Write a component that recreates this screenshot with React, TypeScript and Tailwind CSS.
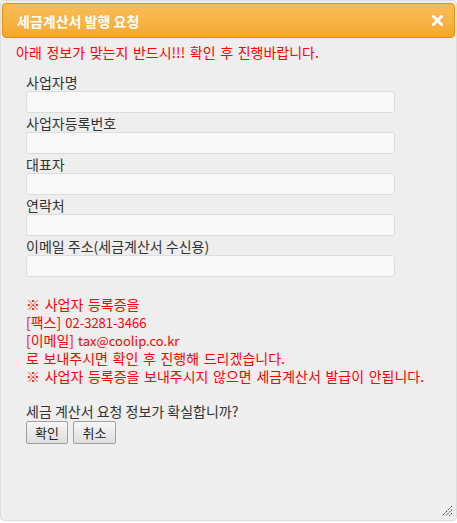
export default function App() {
  const font = { fontFamily: '"Noto Sans CJK KR", "Noto Sans", sans-serif' };
  const fields = ["사업자명", "사업자등록번호", "대표자", "연락처", "이메일 주소(세금계산서 수신용)"];
  const notes: [string, string][] = [
    ["※ 사업자 등록증을", ""],
    ["[팩스]", "02-3281-3466"],
    ["[이메일]", "tax@coolip.co.kr"],
    ["로 보내주시면 확인 후 진행해 드리겠습니다.", ""],
    ["※ 사업자 등록증을 보내주시지 않으면 세금계산서 발급이 안됩니다.", ""],
  ];
  return (
    <div className="w-[457px] h-[523px] bg-white" style={font}>
      <div className="relative w-[457px] h-[521px] bg-[#eeeeee] border border-[#dddddd] rounded-[4px] px-[1px] pt-[2px] flex flex-col">
        <div className="h-[35px] rounded-[4px] border border-[#e78f08] bg-gradient-to-b from-[#f8bc55] via-[#f7b446] to-[#f5a72c] flex items-center justify-between pl-[14px] pr-[12px]">
          <span className="text-white font-bold text-[14px] leading-none">세금계산서 발행 요청</span>
          <svg width="11" height="11" viewBox="0 0 11 11" className="mr-[-1px]">
            <path d="M1.5 1.5 L9.5 9.5 M9.5 1.5 L1.5 9.5" stroke="white" strokeWidth="3" strokeLinecap="round" />
          </svg>
        </div>
        <div className="pl-[14px] pt-[5px] h-[23px] flex items-end text-[14px] text-[#ff0000] leading-[18px] [word-spacing:1.5px]">
          <span className="h-[18px] flex items-center leading-none">아래 정보가 맞는지 반드시!!! 확인 후 진행바랍니다.</span>
        </div>
        <div className="pl-[24px] pt-[11px] flex flex-col">
          {fields.map((f) => (
            <div key={f} className="flex flex-col">
              <div className="text-[14px] text-[#333333] h-[19px] flex items-center leading-none">{f}</div>
              <div className="w-[369px] h-[22px] bg-[#f8f8f8] border border-[#dddddd] rounded-[3px]" />
            </div>
          ))}
          <div className="mt-[18px] text-[14px] text-[#ff0000] flex flex-col [word-spacing:1.5px]">
            {notes.map(([a, b]) => (
              <div key={a} className="h-[18px] flex items-center gap-[4px] leading-none">
                <span>{a}</span>
                {b && <span className="text-[13px]">{b}</span>}
              </div>
            ))}
          </div>
          <div className="mt-[17px] h-[18px] flex items-center text-[14px] text-[#333333] leading-none">세금 계산서 요청 정보가 확실합니까?</div>
          <div className="flex gap-[5px] mt-[1px]">
            <button className="w-[42px] h-[23px] text-[13px] text-[#222] bg-gradient-to-b from-[#f6f6f6] to-[#dedede] border border-[#a0a0a0] rounded-[2px] leading-none">확인</button>
            <button className="w-[43px] h-[23px] text-[13px] text-[#222] bg-gradient-to-b from-[#f6f6f6] to-[#dedede] border border-[#a0a0a0] rounded-[2px] leading-none">취소</button>
          </div>
        </div>
        <svg width="12" height="12" viewBox="0 0 12 12" className="absolute right-[3px] bottom-[3px]">
          <path d="M11 1 L1 11 M11 4.5 L4.5 11 M11 8 L8 11" stroke="#333" strokeWidth="1" strokeDasharray="1.5 0.8" />
        </svg>
      </div>
    </div>
  );
}
